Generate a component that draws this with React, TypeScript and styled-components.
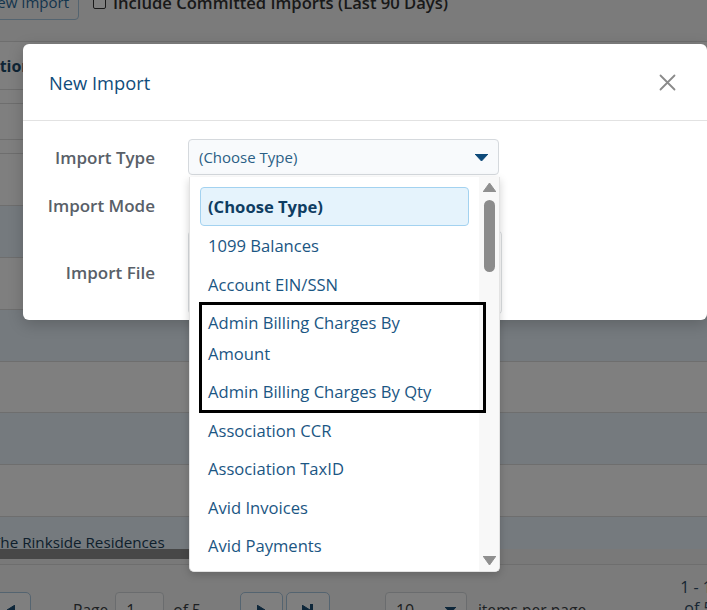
import React from "react";
import styled, { createGlobalStyle } from "styled-components";

const GlobalStyle = createGlobalStyle`
  *, *::before, *::after { box-sizing: border-box; }
  html, body { margin: 0; padding: 0; height: 100%; overflow: hidden; }
  body {
    font-family: "Open Sans", "Noto Sans", "Liberation Sans", sans-serif;
    background: #ffffff;
  }
  #root { height: 100%; }
`;

const Screen = styled.div`
  position: relative;
  width: 707px;
  height: 610px;
  overflow: hidden;
`;

/* ---------- page behind the dialog (scrolled a little) ---------- */

const PageScroller = styled.div`
  margin-left: -100px;
  margin-top: -17px;
  width: 920px;
`;

const Toolbar = styled.div`
  height: 59px;
  padding: 2px 0 0 76px;
  background: #f6f6f6;
  border-bottom: 1px solid #dcdcdc;
`;

const ToolbarRow = styled.div`
  display: flex;
  align-items: center;
  height: 34px;
`;

const OutlineButton = styled.button`
  height: 36px;
  padding: 0 9px;
  border: 1px solid #a9c8e0;
  border-radius: 4px;
  background: transparent;
  color: #2a6a9b;
  font: 400 15px "Open Sans", sans-serif;
`;

const CheckBox = styled.span`
  width: 13px;
  height: 13px;
  margin-left: 14px;
  border: 1px solid #333;
  border-radius: 2px;
  background: #fff;
`;

const CheckLabel = styled.span`
  margin-left: 7px;
  font-size: 16.6px;
  font-weight: 600;
  color: #333;
`;

const GridRow = styled.div<{ $h: number; $alt?: boolean }>`
  display: flex;
  align-items: center;
  height: ${(p) => p.$h}px;
  background: ${(p) => (p.$alt ? "#eaf4fc" : "#ffffff")};
  border-bottom: 1px solid #dcdcdc;
`;

const HeaderCell = styled.div`
  padding-left: 40px;
  font-size: 16px;
  font-weight: 700;
  color: #1d4a6b;
`;

const DataViewport = styled.div`
  height: 395px;
  overflow: hidden;
`;

const DataCell = styled.div`
  align-self: flex-start;
  padding: 15px 0 0 92px;
  font-size: 15.2px;
  color: #203f58;
`;

const HScroll = styled.div`
  height: 16px;
  background: #f2f2f2;
  border-bottom: 1px solid #dcdcdc;
`;

const HThumb = styled.div`
  width: 520px;
  height: 10px;
  background: #8e8e8e;
`;

const Pager = styled.div`
  display: flex;
  align-items: flex-start;
  height: 80px;
  padding: 12px 0 0 91px;
  background: #f6f6f6;
`;

const PagerControls = styled.div`
  display: flex;
  align-items: center;
  margin-top: 15px;
`;

const PagerButton = styled.div<{ $w: number; $ml?: number }>`
  display: flex;
  align-items: center;
  justify-content: center;
  width: ${(p) => p.$w}px;
  height: 36px;
  margin-left: ${(p) => p.$ml ?? 0}px;
  border: 1px solid #a9c8e0;
  border-radius: 5px;
  background: #fff;
`;

const PagerText = styled.span<{ $ml: number }>`
  margin-left: ${(p) => p.$ml}px;
  font-size: 15.6px;
  color: #3a3f44;
`;

const PagerInput = styled.div<{ $w: number; $ml: number }>`
  display: flex;
  align-items: center;
  justify-content: space-between;
  width: ${(p) => p.$w}px;
  height: 36px;
  margin-left: ${(p) => p.$ml}px;
  padding: 0 10px;
  border: 1px solid #d5d9dd;
  border-radius: 4px;
  background: #fff;
  font-size: 16px;
  color: #3a3f44;
`;

const RangeText = styled.div`
  margin-left: 94px;
  font-size: 16px;
  line-height: 21px;
  color: #2f4d66;
`;

/* ---------- dialog ---------- */

const Overlay = styled.div`
  position: absolute;
  inset: 0;
  background: rgba(0, 0, 0, 0.5);
`;

const Modal = styled.div`
  position: absolute;
  left: 23px;
  top: 44px;
  width: 684px;
  height: 276px;
  background: #fff;
  border-radius: 6px;
  box-shadow: 0 4px 16px rgba(0, 0, 0, 0.2);
`;

const ModalHeader = styled.div`
  display: flex;
  align-items: center;
  justify-content: space-between;
  height: 77px;
  padding: 0 31px 0 26px;
  border-bottom: 1px solid #e2e2e2;
`;

const ModalTitle = styled.h2`
  margin: 0;
  font-size: 18.3px;
  font-weight: 400;
  color: #0f4c7b;
`;

const CloseButton = styled.button`
  display: flex;
  padding: 0;
  border: 0;
  background: none;
`;

const ModalBody = styled.div`
  padding-top: 18px;
`;

const FieldRow = styled.div<{ $h: number; $mt: number }>`
  display: grid;
  grid-template-columns: 132px 314px;
  column-gap: 33px;
  align-items: center;
  height: ${(p) => p.$h}px;
  margin-top: ${(p) => p.$mt}px;
`;

const FieldLabel = styled.label`
  text-align: right;
  font-size: 17px;
  font-weight: 600;
  color: #596068;
`;

const SelectBox = styled.div`
  display: flex;
  align-items: center;
  justify-content: space-between;
  width: 311px;
  height: 36px;
  padding: 0 10px;
  background: #f8fafc;
  border: 1px solid #d5d9dd;
  border-radius: 4px;
  font-size: 15px;
  color: #2b5f85;
`;

const DropZone = styled.div`
  height: 85px;
  border: 1px solid #dcdfe2;
  border-radius: 5px;
`;

/* ---------- open dropdown list ---------- */

const Popup = styled.div`
  position: absolute;
  left: 189px;
  top: 177px;
  display: flex;
  width: 311px;
  height: 395px;
  overflow: hidden;
  background: #fff;
  border: 1px solid #e3e3e3;
  border-top: 0;
  border-radius: 0 0 5px 5px;
  box-shadow: 0 3px 8px rgba(0, 0, 0, 0.18);
`;

const OptionList = styled.ul`
  flex: 1;
  margin: 0;
  padding: 10px 10px 0 10px;
  list-style: none;
`;

const Option = styled.li<{ $selected?: boolean }>`
  padding: ${(p) => (p.$selected ? "4.25px 19px 2.25px 7px" : "5px 20px 3px 8px")};
  line-height: 30.5px;
  font-size: 16.6px;
  font-weight: ${(p) => (p.$selected ? 700 : 400)};
  color: ${(p) => (p.$selected ? "#0f3d62" : "#1b5683")};
  background: ${(p) => (p.$selected ? "#e5f3fc" : "transparent")};
  border: ${(p) => (p.$selected ? "1px solid #a3d2f0" : "0")};
  border-radius: 4px;
`;

const Marked = styled.div`
  position: relative;
  &::after {
    content: "";
    position: absolute;
    top: -1px;
    bottom: -2px;
    left: -1px;
    right: -17px;
    border: 3px solid #000;
    pointer-events: none;
  }
`;

const ScrollTrack = styled.div`
  display: flex;
  flex-direction: column;
  align-items: center;
  width: 20px;
  padding: 6px 0;
  background: #f8f8f8;
`;

const ScrollThumb = styled.div`
  width: 11px;
  height: 72px;
  margin-top: 8px;
  border-radius: 6px;
  background: #8c8c8c;
`;

const Spacer = styled.div`
  flex: 1;
`;

const Triangle = ({
  dir,
  color,
  w = 13,
  h = 9,
}: {
  dir: "up" | "down" | "left" | "right";
  color: string;
  w?: number;
  h?: number;
}) => {
  const pts =
    dir === "up"
      ? `0,${h} ${w / 2},0 ${w},${h}`
      : dir === "down"
      ? `0,0 ${w},0 ${w / 2},${h}`
      : dir === "left"
      ? `${w},0 ${w},${h} 0,${h / 2}`
      : `0,0 0,${h} ${w},${h / 2}`;
  return (
    <svg width={w} height={h} viewBox={`0 0 ${w} ${h}`}>
      <polygon points={pts} fill={color} strokeLinejoin="round" stroke={color} strokeWidth="1" />
    </svg>
  );
};

const options = ["1099 Balances", "Account EIN/SSN"];
const moreOptions = [
  "Association CCR",
  "Association TaxID",
  "Avid Invoices",
  "Avid Payments",
  "Bank Balances",
  "Budgets",
];

export default function App() {
  const dataRows = [false, true, false, true, false, true, false, true];
  return (
    <>
      <GlobalStyle />
      <Screen>
        <PageScroller>
          <Toolbar>
            <ToolbarRow>
              <OutlineButton>New Import</OutlineButton>
              <CheckBox />
              <CheckLabel>Include Committed Imports (Last 90 Days)</CheckLabel>
            </ToolbarRow>
          </Toolbar>
          <GridRow $h={48}>
            <HeaderCell>Association</HeaderCell>
          </GridRow>
          <GridRow $h={14} />
          <GridRow $h={36} />
          <GridRow $h={14} />
          <DataViewport>
            {dataRows.map((alt, i) => (
              <GridRow key={i} $h={i === 4 ? 51 : 52} $alt={alt}>
                {i === 7 && <DataCell>The Rinkside Residences</DataCell>}
              </GridRow>
            ))}
          </DataViewport>
          <HScroll>
            <HThumb />
          </HScroll>
          <Pager>
            <PagerControls>
              <PagerButton $w={40}>
                <Triangle dir="left" color="#1d4f75" w={8} h={10} />
              </PagerButton>
              <PagerText $ml={42}>Page</PagerText>
              <PagerInput $w={49} $ml={7}>1</PagerInput>
              <PagerText $ml={9}>of 5</PagerText>
              <PagerButton $w={43} $ml={39}>
                <Triangle dir="right" color="#1d4f75" w={8} h={10} />
              </PagerButton>
              <PagerButton $w={44} $ml={3}>
                <Triangle dir="right" color="#1d4f75" w={8} h={10} />
                <svg width="3" height="12" viewBox="0 0 3 12">
                  <rect width="3" height="12" fill="#1d4f75" />
                </svg>
              </PagerButton>
              <PagerInput $w={82} $ml={55}>
                10
                <Triangle dir="down" color="#1d4f75" w={11} h={6} />
              </PagerInput>
              <PagerText $ml={11}>items per page</PagerText>
            </PagerControls>
            <RangeText>
              1 - 10
              <br />
              &nbsp;of 50 items
            </RangeText>
          </Pager>
        </PageScroller>

        <Overlay />

        <Modal>
          <ModalHeader>
            <ModalTitle>New Import</ModalTitle>
            <CloseButton aria-label="Close">
              <svg width="17" height="17" viewBox="0 0 17 17">
                <path
                  d="M1.5 1.5 L15.5 15.5 M15.5 1.5 L1.5 15.5"
                  stroke="#8a8a8a"
                  strokeWidth="1.8"
                  strokeLinecap="round"
                />
              </svg>
            </CloseButton>
          </ModalHeader>
          <ModalBody>
            <FieldRow $h={36} $mt={0}>
              <FieldLabel>Import Type</FieldLabel>
              <SelectBox>
                (Choose Type)
                <Triangle dir="down" color="#0e4a7a" w={13} h={7} />
              </SelectBox>
            </FieldRow>
            <FieldRow $h={30} $mt={15}>
              <FieldLabel>Import Mode</FieldLabel>
              <div />
            </FieldRow>
            <FieldRow $h={85} $mt={10}>
              <FieldLabel>Import File</FieldLabel>
              <DropZone />
            </FieldRow>
          </ModalBody>
        </Modal>

        <Popup>
          <OptionList>
            <Option $selected>(Choose Type)</Option>
            {options.map((o) => (
              <Option key={o}>{o}</Option>
            ))}
            <Marked>
              <Option>Admin Billing Charges By Amount</Option>
              <Option>Admin Billing Charges By Qty</Option>
            </Marked>
            {moreOptions.map((o) => (
              <Option key={o}>{o}</Option>
            ))}
          </OptionList>
          <ScrollTrack>
            <Triangle dir="up" color="#8f8f8f" />
            <ScrollThumb />
            <Spacer />
            <Triangle dir="down" color="#8f8f8f" />
          </ScrollTrack>
        </Popup>
      </Screen>
    </>
  );
}
